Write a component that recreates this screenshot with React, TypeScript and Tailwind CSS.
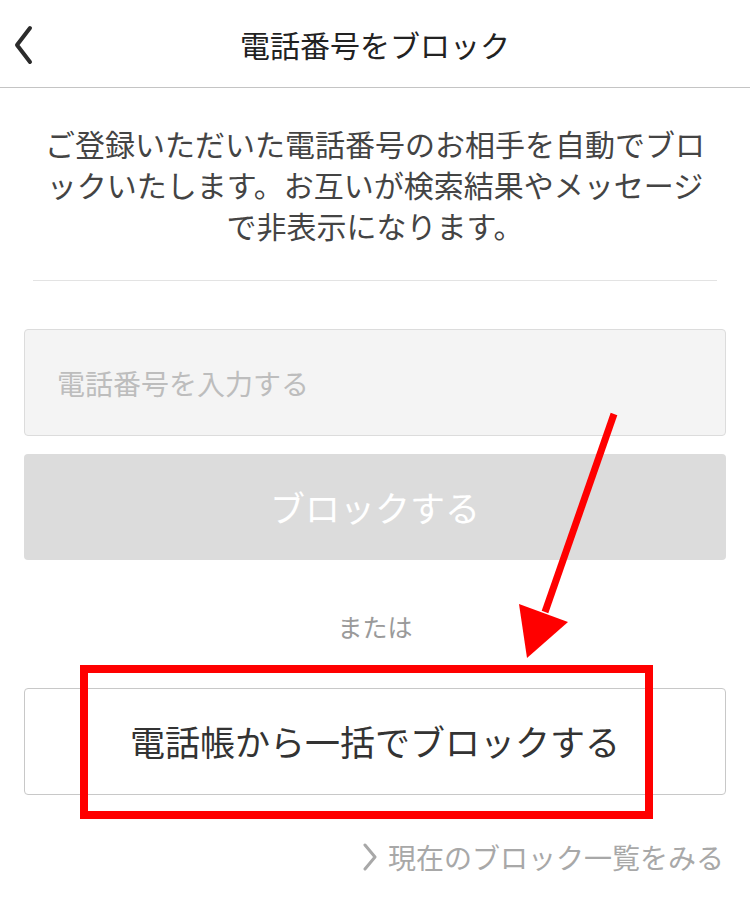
const font = { fontFamily: '"Noto Sans CJK JP", "Noto Sans", sans-serif' };

export default function App() {
  return (
    <div className="relative w-[750px] h-[915px] bg-white text-[#333] overflow-hidden" style={font}>
      {/* header */}
      <div className="relative flex h-[88px] items-center justify-center border-b border-[#c4c4c4]">
        <svg className="absolute left-[12px] top-[25px]" width="24" height="40" viewBox="0 0 24 40">
          <path d="M18 3 L5 20 L18 37" fill="none" stroke="#2b2b2b" strokeWidth="4" strokeLinecap="round" strokeLinejoin="round" />
        </svg>
        <h1 className="text-[30px] leading-none text-[#222]">電話番号をブロック</h1>
      </div>

      {/* description */}
      <div className="px-[36px] pt-[35px] pb-[34px] text-center text-[30px] leading-[41px] text-[#444]">
        <p>ご登録いただいた電話番号のお相手を自動でブロ</p>
        <p>ックいたします。お互いが検索結果やメッセージ</p>
        <p>で非表示になります。</p>
      </div>
      <div className="mx-[33px] h-px bg-[#e3e3e3]" />

      {/* form */}
      <div className="px-[24px] pt-[48px] flex flex-col">
        <div className="flex h-[107px] items-center rounded-[4px] border border-[#dcdcdc] bg-[#f4f4f4] px-[32px]">
          <span className="text-[28px] text-[#bdbdbd]">電話番号を入力する</span>
        </div>
        <button className="mt-[18px] flex h-[106px] items-center justify-center rounded-[4px] bg-[#dcdcdc] text-[35px] text-white">
          ブロックする
        </button>
        <div className="mt-[54px] text-center text-[25px] leading-none text-[#9a9a9a]">または</div>
        <button className="mt-[49px] flex h-[107px] items-center justify-center rounded-[4px] border border-[#c8c8c8] bg-white text-[35px] text-[#333]">
          電話帳から一括でブロックする
        </button>
        <div className="mt-[48px] flex items-center justify-end gap-[10px] pr-[2px] text-[28px] leading-none text-[#a8a8a8]">
          <svg width="16" height="28" viewBox="0 0 16 28">
            <path d="M3 2 L13 14 L3 26" fill="none" stroke="#a8a8a8" strokeWidth="3" strokeLinecap="round" strokeLinejoin="round" />
          </svg>
          <span>現在のブロック一覧をみる</span>
        </div>
      </div>

      {/* red annotation overlay */}
      <svg className="pointer-events-none absolute left-0 top-0" width="750" height="915">
        <line x1="614" y1="414" x2="545" y2="612" stroke="#ff0000" strokeWidth="7" />
        <polygon points="519,604 568,622 527,658" fill="#ff0000" />
        <rect x="84" y="669" width="565" height="146" fill="none" stroke="#ff0000" strokeWidth="8" />
      </svg>
    </div>
  );
}
